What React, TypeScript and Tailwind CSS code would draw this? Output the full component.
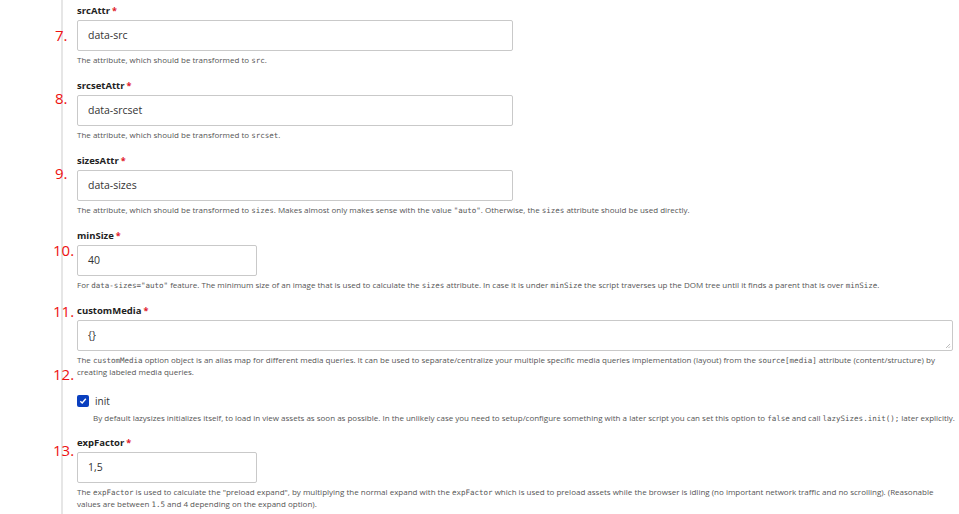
import React from "react"

const sans = { fontFamily: "'Open Sans', 'Noto Sans', sans-serif" }

const Code = ({ children }: { children: React.ReactNode }) => (
    <code className="font-['DejaVu_Sans_Mono',monospace] text-[7.5px] leading-none text-[#555]">{children}</code>
)

const Field = ({ label, value, wide, desc }: { label: string; value: string; wide?: "full" | "short"; desc: React.ReactNode }) => {
    const w = wide === "full" ? "w-[876px]" : wide === "short" ? "w-[180px]" : "w-[436px]"
    return (
        <div className="mb-[14px]">
            <div className="h-[12px] mb-[3px] flex items-center text-[9.5px] font-bold text-[#222] leading-[12px]">
                {label}
                <span className="text-[#e0182b] ml-[2px] text-[9px]">*</span>
            </div>
            <div className={`${w} h-[31px] border border-[#c9c9c9] rounded-[2px] bg-white flex items-center px-[10px] text-[10.5px] text-[#333] relative`}>
                {value}
                {wide === "full" && (
                    <svg className="absolute right-[1px] bottom-[1px]" width="6" height="6" viewBox="0 0 6 6">
                        <path d="M5 1 L1 5 M5 3.5 L3.5 5" stroke="#aaa" strokeWidth="0.8" />
                    </svg>
                )}
            </div>
            <p className="mt-[3px] text-[8px] leading-[12px] text-[#555] whitespace-nowrap">{desc}</p>
        </div>
    )
}

const notes = [
    { n: "7.", top: "top-[26px]", left: "left-[55px]" },
    { n: "8.", top: "top-[89px]", left: "left-[55px]" },
    { n: "9.", top: "top-[164px]", left: "left-[55px]" },
    { n: "10.", top: "top-[241px]", left: "left-[53px]" },
    { n: "11.", top: "top-[302px]", left: "left-[53px]" },
    { n: "12.", top: "top-[365px]", left: "left-[53px]" },
    { n: "13.", top: "top-[441px]", left: "left-[53px]" },
]

const App = () => {
    return (
        <div className="w-[959px] h-[514px] overflow-hidden bg-white relative" style={sans}>
            <div className="ml-[61px] border-l-2 border-[#e6e6e6] h-full pl-[14px] pt-[5px]">
                <Field
                    label="srcAttr"
                    value="data-src"
                    desc={<>The attribute, which should be transformed to <Code>src</Code>.</>}
                />
                <Field
                    label="srcsetAttr"
                    value="data-srcset"
                    desc={<>The attribute, which should be transformed to <Code>srcset</Code>.</>}
                />
                <Field
                    label="sizesAttr"
                    value="data-sizes"
                    desc={<>The attribute, which should be transformed to <Code>sizes</Code>. Makes almost only makes sense with the value <Code>"auto"</Code>. Otherwise, the <Code>sizes</Code> attribute should be used directly.</>}
                />
                <Field
                    label="minSize"
                    value="40"
                    wide="short"
                    desc={<>For <Code>data-sizes="auto"</Code> feature. The minimum size of an image that is used to calculate the <Code>sizes</Code> attribute. In case it is under <Code>minSize</Code> the script traverses up the DOM tree until it finds a parent that is over <Code>minSize</Code>.</>}
                />
                <Field
                    label="customMedia"
                    value="{}"
                    wide="full"
                    desc={<>The <Code>customMedia</Code> option object is an alias map for different media queries. It can be used to separate/centralize your multiple specific media queries implementation (layout) from the <Code>source[media]</Code> attribute (content/structure) by<br />creating labeled media queries.</>}
                />
                <div className="mb-[13px]">
                    <div className="h-[18px] flex items-center gap-[6px]">
                        <span className="w-[12px] h-[12px] rounded-[2px] bg-[#0a3fbf] flex items-center justify-center">
                            <svg width="8" height="8" viewBox="0 0 8 8">
                                <path d="M1.3 4.2 L3.2 6 L6.8 1.8" stroke="white" strokeWidth="1.4" fill="none" />
                            </svg>
                        </span>
                        <span className="text-[10px] text-[#333]">init</span>
                    </div>
                    <p className="ml-[16px] mt-[2px] text-[8px] leading-[12px] text-[#555] whitespace-nowrap">
                        By default lazysizes initializes itself, to load in view assets as soon as possible. In the unlikely case you need to setup/configure something with a later script you can set this option to <Code>false</Code> and call <Code>lazySizes.init();</Code> later explicitly.
                    </p>
                </div>
                <Field
                    label="expFactor"
                    value="1,5"
                    wide="short"
                    desc={<>The <Code>expFactor</Code> is used to calculate the "preload expand", by multiplying the normal expand with the <Code>expFactor</Code> which is used to preload assets while the browser is idling (no important network traffic and no scrolling). (Reasonable<br />values are between <Code>1.5</Code> and 4 depending on the expand option).</>}
                />
            </div>
            {notes.map((a) => (
                <span key={a.n} className={`absolute ${a.top} ${a.left} text-[15px] leading-[18px] text-[#ee1111]`}>{a.n}</span>
            ))}
        </div>
    )
}

export default App
